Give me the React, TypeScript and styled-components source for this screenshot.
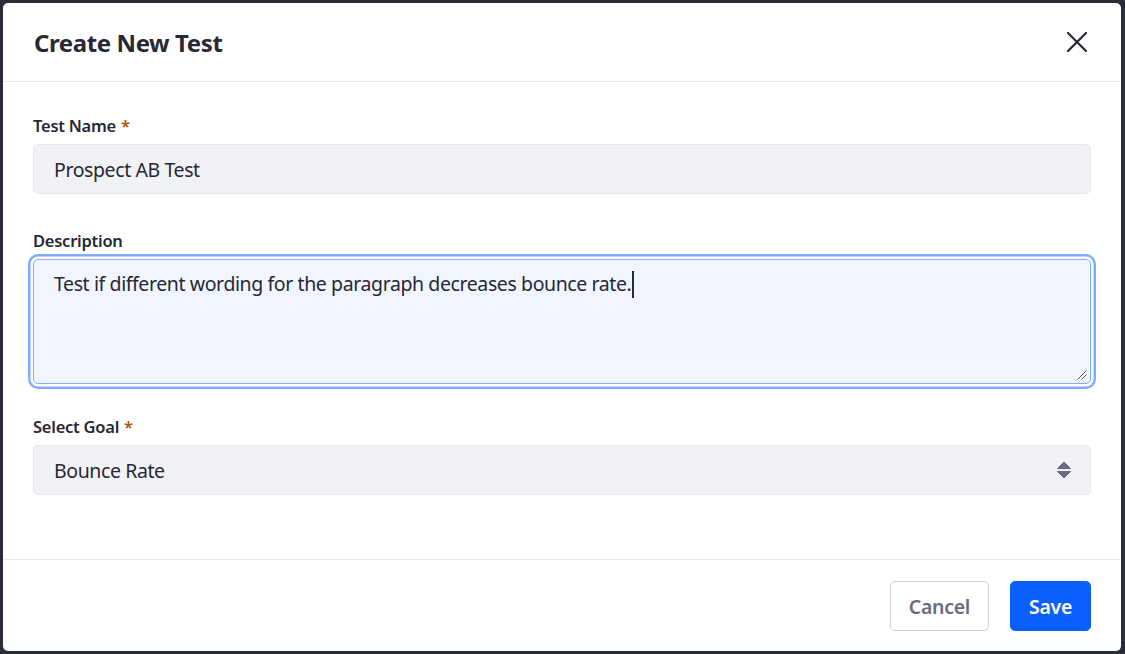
import React from "react";
import styled, { createGlobalStyle } from "styled-components";

const GlobalStyle = createGlobalStyle`
  html, body {
    margin: 0;
    padding: 0;
    height: 100%;
  }
  body {
    background: #2c2d3b;
    font-family: "Noto Sans", "Open Sans", Arial, sans-serif;
    color: #272833;
  }
  * { box-sizing: border-box; }
`;

const Backdrop = styled.div`
  height: 100vh;
  padding: 3px 4px 3px 3px;
  display: flex;
`;

const Modal = styled.div`
  flex: 1;
  background: #ffffff;
  border-radius: 5px;
  display: flex;
  flex-direction: column;
  overflow: hidden;
`;

const Header = styled.header`
  height: 79px;
  flex: none;
  border-bottom: 1px solid #e7e7ed;
  padding: 0 34px 0 31px;
  display: flex;
  align-items: center;
  justify-content: space-between;
`;

const Title = styled.h1`
  margin: 0;
  font-size: 24px;
  font-weight: 700;
  letter-spacing: -0.4px;
  color: #272833;
  line-height: 1;
  padding-top: 2px;
`;

const CloseButton = styled.button`
  width: 20px;
  height: 20px;
  padding: 0;
  border: 0;
  background: transparent;
  color: #272833;
  display: flex;
  align-items: center;
  justify-content: center;
  cursor: pointer;
`;

const Body = styled.div`
  flex: 1;
  padding: 32px 30px 0;
`;

const FormGroup = styled.div<{ $gap: number }>`
  margin-bottom: ${(p) => p.$gap}px;
`;

const Label = styled.label`
  display: block;
  font-size: 16.5px;
  font-weight: 600;
  letter-spacing: -0.25px;
  line-height: 24px;
  margin-bottom: 6px;
  color: #272833;
`;

const Required = styled.span`
  color: #b95000;
  margin-left: 5px;
`;

const fieldBase = `
  width: 100%;
  border-radius: 5px;
  font-size: 19.5px;
  letter-spacing: -0.4px;
  color: #272833;
  font-family: inherit;
`;

const Input = styled.div`
  ${fieldBase}
  height: 50px;
  background: #f1f2f5;
  border: 1px solid #e7e7ed;
  padding: 1px 20px 0;
  display: flex;
  align-items: center;
  position: relative;
`;

const TextArea = styled.div`
  ${fieldBase}
  height: 125px;
  background: #f0f5ff;
  border: 1px solid #80acff;
  box-shadow: 0 0 0 2.5px #ffffff, 0 0 0 5px #80acff;
  padding: 9px 20px;
  line-height: 30px;
  position: relative;
`;

const Caret = styled.span`
  display: inline-block;
  width: 1.5px;
  height: 27px;
  background: #272833;
  vertical-align: -7px;
  margin-left: 1px;
`;

const ResizeGrip = styled.svg`
  position: absolute;
  right: 3px;
  bottom: 3px;
`;

const SelectArrows = styled.svg`
  position: absolute;
  right: 19px;
  top: 50%;
  transform: translateY(-50%);
`;

const Footer = styled.footer`
  flex: none;
  border-top: 1px solid #e7e7ed;
  padding: 21px 30px 20px;
  display: flex;
  justify-content: flex-end;
  gap: 21px;
`;

const Button = styled.button<{ $primary?: boolean }>`
  height: 50px;
  padding: 0 18px;
  border-radius: 5px;
  font-family: inherit;
  font-size: 19.5px;
  font-weight: 600;
  letter-spacing: -0.3px;
  cursor: pointer;
  border: 1px solid ${(p) => (p.$primary ? "#0b5fff" : "#cdced9")};
  background: ${(p) => (p.$primary ? "#0b5fff" : "#ffffff")};
  color: ${(p) => (p.$primary ? "#ffffff" : "#6b6c7e")};
`;

export default function App() {
  return (
    <>
      <GlobalStyle />
      <Backdrop>
        <Modal role="dialog" aria-labelledby="modal-title">
          <Header>
            <Title id="modal-title">Create New Test</Title>
            <CloseButton aria-label="Close">
              <svg width="20" height="20" viewBox="0 0 20 20">
                <path
                  d="M1 1 L19 19 M19 1 L1 19"
                  stroke="currentColor"
                  strokeWidth="2.2"
                  strokeLinecap="square"
                />
              </svg>
            </CloseButton>
          </Header>
          <Body>
            <FormGroup $gap={35}>
              <Label>
                Test Name<Required>*</Required>
              </Label>
              <Input>Prospect AB Test</Input>
            </FormGroup>
            <FormGroup $gap={31}>
              <Label>Description</Label>
              <TextArea role="textbox" aria-multiline="true">
                Test if different wording for the paragraph decreases bounce rate.
                <Caret />
                <ResizeGrip width="11" height="11" viewBox="0 0 11 11">
                  <path
                    d="M10.5 1.5 L1.5 10.5 M10.5 5.5 L5.5 10.5"
                    stroke="#555"
                    strokeWidth="1"
                  />
                </ResizeGrip>
              </TextArea>
            </FormGroup>
            <FormGroup $gap={0}>
              <Label>
                Select Goal<Required>*</Required>
              </Label>
              <Input>
                Bounce Rate
                <SelectArrows width="14" height="17" viewBox="0 0 14 17">
                  <path d="M7 0.5 L13.5 7 H0.5 Z" fill="#6b6c7e" strokeLinejoin="round" stroke="#6b6c7e" strokeWidth="1" />
                  <path d="M0.5 10 H13.5 L7 16.5 Z" fill="#6b6c7e" strokeLinejoin="round" stroke="#6b6c7e" strokeWidth="1" />
                </SelectArrows>
              </Input>
            </FormGroup>
          </Body>
          <Footer>
            <Button>Cancel</Button>
            <Button $primary>Save</Button>
          </Footer>
        </Modal>
      </Backdrop>
    </>
  );
}
